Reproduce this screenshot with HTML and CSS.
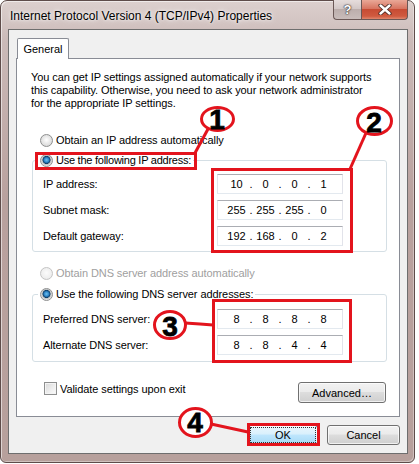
FILE: index.html
```html
<!DOCTYPE html>
<html lang="en">
<head>
  <meta charset="UTF-8" />
  <title>Internet Protocol Version 4 (TCP/IPv4) Properties</title>
  <link rel="stylesheet" href="styles.css">
</head>
<body>

  <div class="window">
    <div class="titlebar">
      <span class="title">Internet Protocol Version 4 (TCP/IPv4) Properties</span>
      <div class="caption-buttons">
        <span class="cap-help">?</span>
        <span class="cap-close">
          <svg width="14" height="11" viewBox="0 0 14 11">
            <path d="M2.5 1.5 L11.5 9.5 M11.5 1.5 L2.5 9.5" stroke="#4a2a24" stroke-width="4.2" stroke-linecap="round" fill="none"/>
            <path d="M2.5 1.5 L11.5 9.5 M11.5 1.5 L2.5 9.5" stroke="#fff" stroke-width="2.4" stroke-linecap="round" fill="none"/>
          </svg>
        </span>
      </div>
    </div>

    <div class="client">
      <div class="tabs"><span class="tab">General</span></div>

      <div class="panel">
        <p class="intro">You can get IP settings assigned automatically if your network supports<br>this capability. Otherwise, you need to ask your network administrator<br>for the appropriate IP settings.</p>

        <div class="radio first"><span class="dot"></span>Obtain an IP address automatically</div>

        <fieldset class="group">
          <legend><span class="radio tight"><span class="dot on"></span>Use the following IP address:</span></legend>
          <div class="row">
            <span>IP address:</span>
            <div class="ipbox"><span>10</span><i>.</i><span>0</span><i>.</i><span>0</span><i>.</i><span>1</span></div>
          </div>
          <div class="row">
            <span>Subnet mask:</span>
            <div class="ipbox"><span>255</span><i>.</i><span>255</span><i>.</i><span>255</span><i>.</i><span>0</span></div>
          </div>
          <div class="row">
            <span>Default gateway:</span>
            <div class="ipbox"><span>192</span><i>.</i><span>168</span><i>.</i><span>0</span><i>.</i><span>2</span></div>
          </div>
        </fieldset>

        <div class="radio disabled dns-auto"><span class="dot"></span>Obtain DNS server address automatically</div>

        <fieldset class="group dns">
          <legend><span class="radio"><span class="dot on"></span>Use the following DNS server addresses:</span></legend>
          <div class="row">
            <span>Preferred DNS server:</span>
            <div class="ipbox"><span>8</span><i>.</i><span>8</span><i>.</i><span>8</span><i>.</i><span>8</span></div>
          </div>
          <div class="row">
            <span>Alternate DNS server:</span>
            <div class="ipbox"><span>8</span><i>.</i><span>8</span><i>.</i><span>4</span><i>.</i><span>4</span></div>
          </div>
        </fieldset>

        <div class="options">
          <div class="check"><span class="box"></span>Validate settings upon exit</div>
          <button class="btn advanced">Advanced…</button>
        </div>
      </div>

      <div class="footer">
        <button class="btn ok">OK</button>
        <button class="btn cancel">Cancel</button>
      </div>
    </div>
  </div>

  <!-- numbered callouts drawn over the dialog -->
  <svg class="marks" width="419" height="464" viewBox="0 0 419 464">
    <g fill="none" stroke="#e3141d" stroke-width="3">
      <rect x="36.5" y="153.5" width="159" height="15"/>
      <rect x="212.5" y="169.5" width="139" height="82"/>
      <rect x="213.5" y="300.5" width="137" height="61"/>
      <rect x="248.5" y="424.5" width="70" height="20"/>
      <line x1="195" y1="153" x2="208" y2="129"/>
      <line x1="350" y1="169" x2="366" y2="133"/>
      <polyline points="185,323 200,324 213,325"/>
      <line x1="211" y1="424" x2="248" y2="432"/>
    </g>
    <g fill="#fff" stroke="#e3141d" stroke-width="3">
      <ellipse cx="217.5" cy="119" rx="16" ry="11.5"/>
      <ellipse cx="374.5" cy="121" rx="17" ry="13.5"/>
      <ellipse cx="170" cy="325" rx="15.5" ry="13.5"/>
      <ellipse cx="195.5" cy="422.5" rx="16" ry="14"/>
    </g>
    <g class="num" text-anchor="middle">
      <text x="217" y="128.5">1</text>
      <text x="374" y="132">2</text>
      <text x="170" y="335.5">3</text>
      <text x="195" y="432">4</text>
    </g>
  </svg>

</body>
</html>
```

FILE: styles.css
```css
* {
  box-sizing: border-box;
}
body {
  margin: 0;
  width: 419px;
  height: 464px;
  position: relative;
  overflow: hidden;
  background-color: #fff;
  font-family: "Liberation Sans", Arial, sans-serif;
  font-size: 11px;
  color: #000;
}

/* window frame */
.window {
  width: 415px;
  height: 463px;
  padding: 0 6px 8px 7px;
  border: 1px solid #5e4c4a;
  border-radius: 7px 7px 6px 6px;
  background: linear-gradient(to bottom, #dcd0ce 0, #cbbab8 40px, #b9a19e 200px, #b7a09c 100%);
  box-shadow: inset 1px 1px 0 rgba(255,255,255,0.55), inset -1px -1px 0 rgba(255,255,255,0.35);
}
.titlebar {
  height: 28px;
  display: flex;
  justify-content: space-between;
  align-items: flex-start;
}
.title {
  padding: 8px 0 0 2px;
  font-size: 12px;
  line-height: 14px;
  text-shadow: 0 0 6px rgba(255,255,255,0.9), 0 0 3px rgba(255,255,255,0.9);
}
.caption-buttons {
  display: flex;
  margin-top: -1px;
}
.cap-help,
.cap-close {
  height: 20px;
  display: flex;
  align-items: center;
  justify-content: center;
  border: 1px solid #6b5856;
  border-top: none;
}
.cap-help {
  width: 28px;
  border-right: none;
  border-radius: 0 0 0 4px;
  background: linear-gradient(to bottom, #e6dddc 0, #d3c8c7 45%, #bcaeac 50%, #c9bcba 100%);
  color: #fff;
  font-weight: bold;
  font-size: 13px;
  text-shadow: 0 0 1px #3d3331, 0 0 1px #3d3331, 0 0 2px #3d3331;
}
.cap-close {
  width: 47px;
  border-radius: 0 0 4px 0;
  background: linear-gradient(to bottom, #e9a897 0, #d77561 45%, #c74c34 50%, #d05a3f 85%, #e0876d 100%);
}

/* client area */
.client {
  border: 1px solid #6e6e6e;
  background-color: #f0f0f0;
  padding: 8px 7px 8px 7px;
}
.tabs {
  height: 20px;
  padding-left: 1px;
}
.tab {
  position: relative;
  z-index: 1;
  display: inline-block;
  width: 52px;
  height: 21px;
  padding-top: 4px;
  text-align: center;
  background-color: #fff;
  border: 1px solid #898c95;
  border-bottom: none;
  border-radius: 2px 2px 0 0;
  line-height: 13px;
}
.panel {
  height: 359px;
  padding: 12px 12px 0 15px;
  background-color: #fff;
  border: 1px solid #898c95;
  letter-spacing: -0.08px;
}
.intro {
  margin: 0 0 0 -1px;
  line-height: 13px;
}

/* radios and checkbox */
.radio {
  display: flex;
  align-items: center;
  height: 14px;
  line-height: 14px;
}
.radio.tight {
  letter-spacing: -0.25px;
}
.radio.first {
  margin: 23px 0 0 8px;
}
.dot {
  width: 13px;
  height: 13px;
  margin-right: 3px;
  border-radius: 50%;
  border: 1px solid #8e8f8f;
  background: radial-gradient(circle at 50% 45%, #ffffff 0, #e8e8e8 45%, #cfd0d0 100%);
}
.dot.on {
  background: radial-gradient(circle at 50% 45%, #6fc2ee 0, #2f86c9 28%, #0c3c66 45%, #b8bcbf 52%, #eeeeee 75%, #d6d6d6 100%);
}
.radio.disabled {
  color: #a0a0a0;
}
.radio.disabled .dot {
  border-color: #c4c4c4;
  background: radial-gradient(circle at 50% 45%, #fbfbfb 0, #efefef 60%, #e3e3e3 100%);
}
.dns-auto {
  margin: 14px 0 0 8px;
}

.group {
  margin: 6px 0 0 0;
  padding: 7px 43px 5px 10px;
  border: 1px solid #d5dfe5;
  border-radius: 3px;
}
.group legend {
  margin-left: -5px;
  padding: 0 2px;
}
.group.dns {
  margin-top: 7px;
  padding-top: 8px;
  padding-bottom: 6px;
}
.row {
  display: flex;
  justify-content: space-between;
  align-items: center;
  height: 20px;
}
.row + .row {
  margin-top: 6px;
}
.ipbox {
  width: 126px;
  height: 20px;
  display: flex;
  align-items: center;
  padding-left: 6px;
  background-color: #fff;
  border: 1px solid #e2e3ea;
  border-top-color: #abadb3;
  border-bottom-color: #e3e9ef;
  letter-spacing: 0;
}
.ipbox span {
  width: 25px;
  text-align: center;
}
.ipbox i {
  width: 4px;
  font-style: normal;
  text-align: center;
}

.options {
  display: flex;
  justify-content: space-between;
  align-items: flex-start;
  margin-top: 20px;
}
.check {
  display: flex;
  align-items: center;
  height: 13px;
  margin: 0 0 0 12px;
  line-height: 14px;
}
.box {
  width: 13px;
  height: 13px;
  margin-right: 3px;
  border: 1px solid #8e8f8f;
  background: linear-gradient(135deg, #d8d8d8 0, #efefef 60%, #fbfbfb 100%);
  box-shadow: inset 0 0 0 1px #f4f4f4;
}

/* push buttons */
.btn {
  height: 20px;
  padding: 0;
  font-family: inherit;
  font-size: 11px;
  color: #000;
  border: 1px solid #707070;
  border-radius: 3px;
  background: linear-gradient(to bottom, #f2f2f2 0, #ebebeb 45%, #dddddd 50%, #cfcfcf 100%);
  box-shadow: inset 0 0 0 1px rgba(255,255,255,0.7);
}
.advanced {
  width: 88px;
  height: 21px;
  margin-right: 1px;
}
.footer {
  display: flex;
  justify-content: flex-end;
  gap: 9px;
  margin-top: 8px;
}
.ok {
  width: 70px;
  border-color: #3c7fb1;
  background: linear-gradient(to bottom, #eaf6fd 0, #d9f0fc 45%, #bee6fd 50%, #a7d9f5 100%);
  outline: 1px dotted #333;
  outline-offset: -3px;
}
.cancel {
  width: 73px;
}

/* callouts */
.marks {
  position: absolute;
  top: 0;
  left: 0;
  pointer-events: none;
}
.num text {
  font-family: "Liberation Sans", Arial, sans-serif;
  font-weight: bold;
  font-size: 28px;
  fill: #000;
  stroke: #000;
  stroke-width: 0.8;
}
```
